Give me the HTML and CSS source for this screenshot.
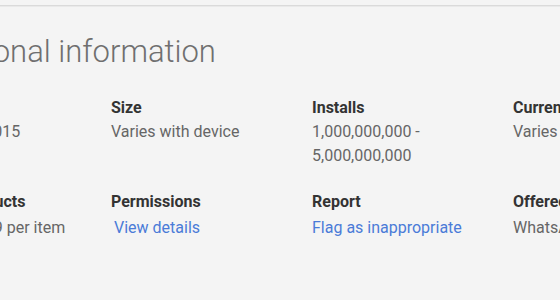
FILE: index.html
```html
<!DOCTYPE html>
<html>
<head>
<meta charset="utf-8">
<link rel="stylesheet" href="styles.css">
</head>
<body>
<div class="divider"></div>
<section class="details">
  <h2 class="heading">Additional information</h2>
  <div class="grid">
    <div class="meta">
      <div class="label">Updated</div>
      <div class="value">March 25, 2015</div>
    </div>
    <div class="meta">
      <div class="label">Size</div>
      <div class="value">Varies with device</div>
    </div>
    <div class="meta">
      <div class="label">Installs</div>
      <div class="value">1,000,000,000 -<br>5,000,000,000</div>
    </div>
    <div class="meta">
      <div class="label">Current Version</div>
      <div class="value">Varies with device</div>
    </div>
    <div class="meta">
      <div class="label">In-app Products</div>
      <div class="value action">$0.99 - $9.99 per item</div>
    </div>
    <div class="meta">
      <div class="label">Permissions</div>
      <div class="value action"><a class="link btn" href="#">View details</a></div>
    </div>
    <div class="meta">
      <div class="label">Report</div>
      <div class="value action"><a class="link" href="#">Flag as inappropriate</a></div>
    </div>
    <div class="meta">
      <div class="label">Offered By</div>
      <div class="value action">WhatsApp Inc.</div>
    </div>
  </div>
</section>
</body>
</html>
```

FILE: styles.css
```css
html, body {
  margin: 0;
  padding: 0;
  background: #f4f4f4;
  overflow: hidden;
  width: 560px;
  height: 300px;
}
body {
  font-family: Roboto, "Liberation Sans", sans-serif;
}
.divider {
  margin-top: 5px;
  height: 1px;
  background: #dadada;
  border-bottom: 1px solid #e9e9e9;
}
.details {
  margin-left: -90px;
  width: 900px;
}
.heading {
  margin: 25px 0 0 5px;
  font-size: 31px;
  line-height: 40px;
  font-weight: 300;
  color: #6f6f6f;
}
.grid {
  margin-top: 25px;
  display: grid;
  grid-template-columns: repeat(4, 201px);
  row-gap: 23px;
}
.label {
  font-size: 16px;
  line-height: 22px;
  font-weight: 700;
  color: #333;
  white-space: nowrap;
}
.value {
  padding-top: 1px;
  font-size: 16px;
  line-height: 24px;
  color: #666;
  white-space: nowrap;
}
.value.action {
  padding-top: 3px;
}
.link {
  color: #4a7bd8;
  text-decoration: none;
}
.btn {
  padding-left: 3px;
}
```
